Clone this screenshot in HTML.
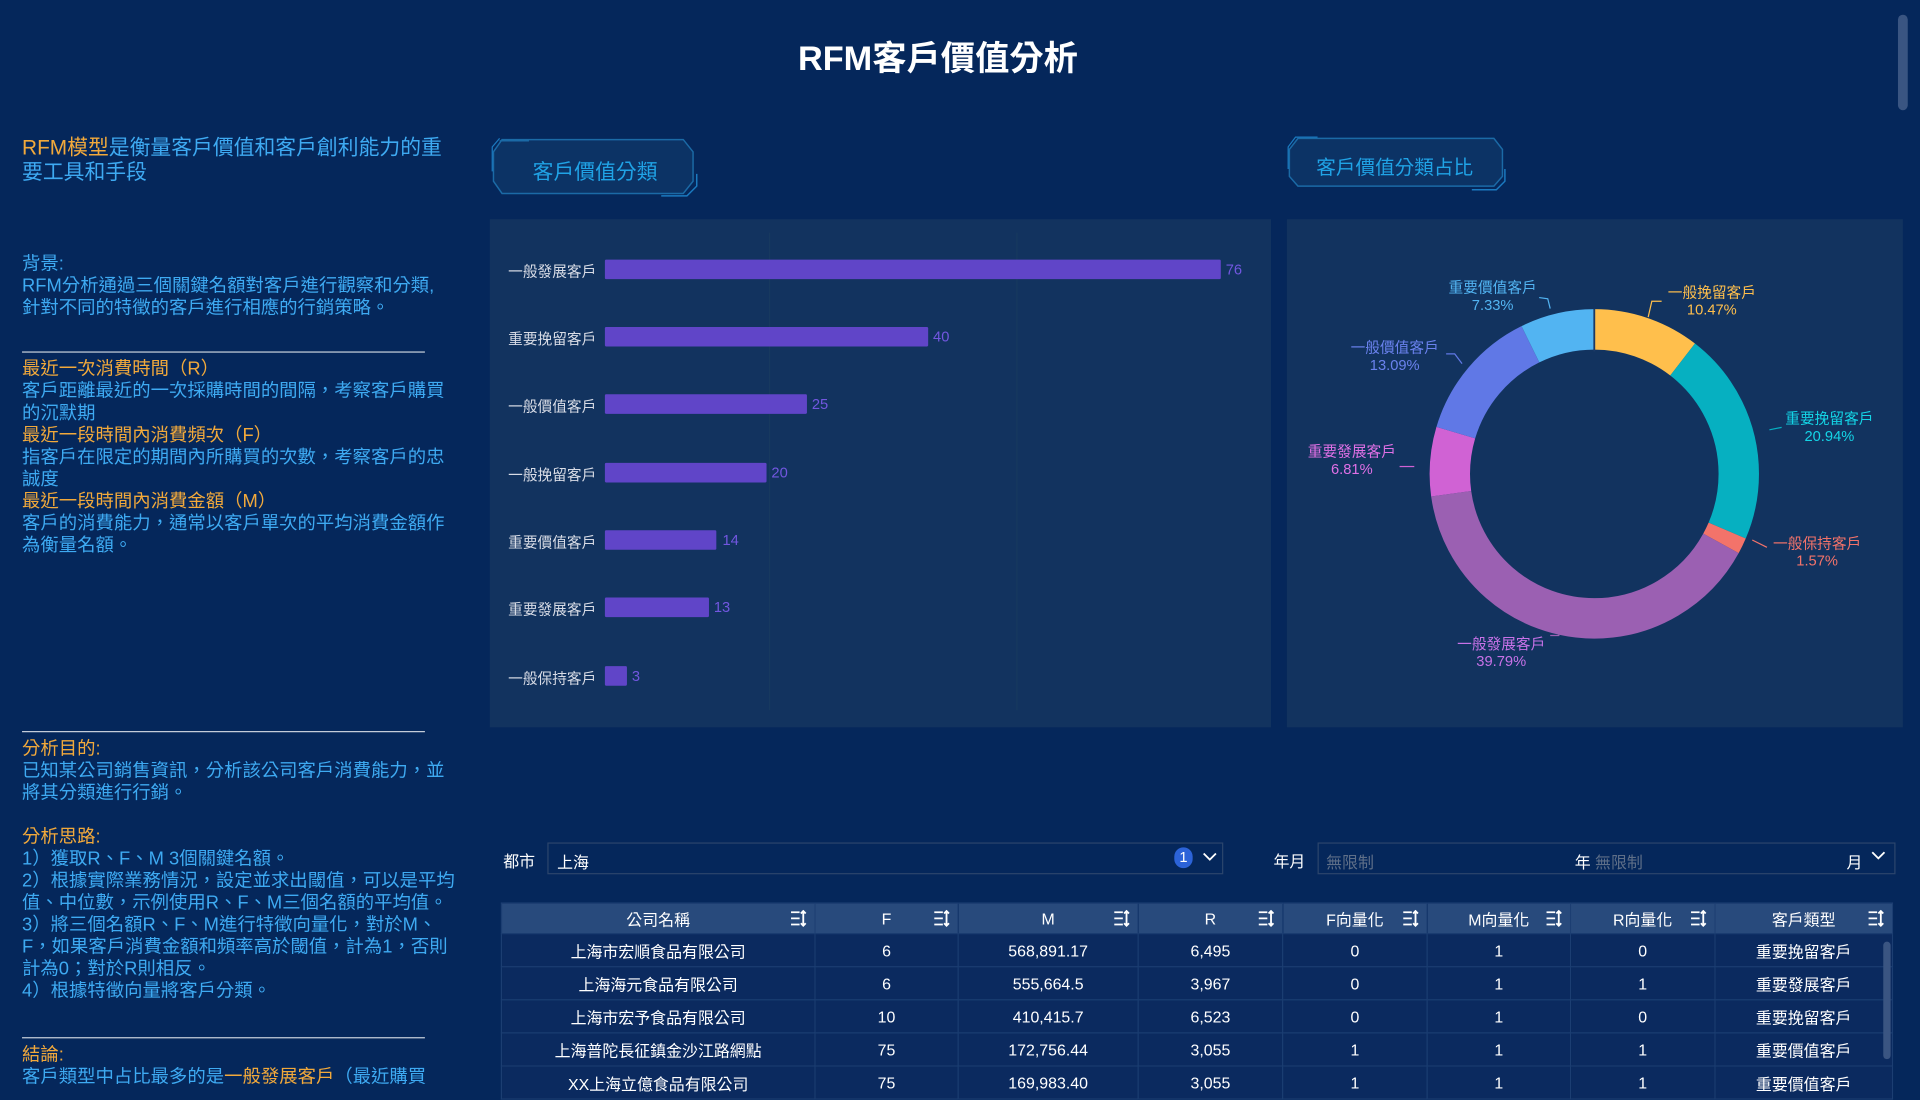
<!DOCTYPE html>
<html><head><meta charset="utf-8"><style>
html,body{margin:0;padding:0;background:#05275b;overflow:hidden;width:1920px;height:1080px}
#w{position:absolute;left:0;top:0;width:1568px;height:882px;transform:scale(1.22449);transform-origin:0 0;font-family:"Liberation Sans","Noto Sans CJK TC",sans-serif;}
.a{position:absolute;white-space:nowrap}
.lt{position:absolute;left:18px;font-size:15px;line-height:18px;color:#3eaaf2;white-space:nowrap}
.o{color:#f2a93b}
.hr{position:absolute;left:18px;width:329px;height:1px;background:#c8d0dc}
.bl{position:absolute;right:1081px;font-size:12px;color:#d8dce6;text-align:right}
.bar{position:absolute;left:494px;height:16px;background:#6045c8;border-radius:1px}
.bv{position:absolute;font-size:12px;color:#7257e0}
.pl{position:absolute;font-size:12px;line-height:14px;text-align:center;white-space:nowrap;transform:translateX(-50%)}
table{position:absolute;left:409px;top:737px;border-collapse:collapse;font-size:13px;color:#fff}
td,th{border:1px solid #1c3e72;text-align:center;height:26px;padding:0;position:relative}
th{background:#284a7c;font-weight:normal;height:24px}
td{background:#0b2a5f}
.si{position:absolute;right:6px;top:5px}
</style></head><body><div id="w">
<div class="a" style="left:0;width:1532px;top:26px;text-align:center;font-size:28px;font-weight:bold;color:#fff">RFM客戶價值分析</div>
<div class="a" style="left:1550px;top:12px;width:8px;height:78px;border-radius:4px;background:#3a5582"></div>

<div class="lt" style="top:111px;font-size:17px;line-height:20px"><span class="o">RFM模型</span>是衡量客戶價值和客戶創利能力的重<br>要工具和手段</div>
<div class="lt" style="top:207px">背景:<br>RFM分析通過三個關鍵名額對客戶進行觀察和分類,<br>針對不同的特徵的客戶進行相應的行銷策略。</div>
<div class="hr" style="top:287px"></div>
<div class="lt" style="top:293px"><span class="o">最近一次消費時間（R）</span><br>客戶距離最近的一次採購時間的間隔，考察客戶購買<br>的沉默期<br><span class="o">最近一段時間內消費頻次（F）</span><br>指客戶在限定的期間內所購買的次數，考察客戶的忠<br>誠度<br><span class="o">最近一段時間內消費金額（M）</span><br>客戶的消費能力，通常以客戶單次的平均消費金額作<br>為衡量名額。</div>
<div class="hr" style="top:597px"></div>
<div class="lt" style="top:603px"><span class="o">分析目的:</span><br>已知某公司銷售資訊，分析該公司客戶消費能力，並<br>將其分類進行行銷。</div>
<div class="lt" style="top:675px"><span class="o">分析思路:</span><br>1）獲取R、F、M 3個關鍵名額。<br>2）根據實際業務情況，設定並求出閾值，可以是平均<br>值、中位數，示例使用R、F、M三個名額的平均值。<br>3）將三個名額R、F、M進行特徵向量化，對於M、<br>F，如果客戶消費金額和頻率高於閾值，計為1，否則<br>計為0；對於R則相反。<br>4）根據特徵向量將客戶分類。</div>
<div class="hr" style="top:847px"></div>
<div class="lt" style="top:853px"><span class="o">結論:</span><br>客戶類型中占比最多的是<span class="o">一般發展客戶</span>（最近購買</div>

<svg class="a" style="left:400px;top:110px" width="175" height="52"><path d="M8 5H32M3 14L10 4H158L166 14V38L158 48H10L3 38Z" fill="#0c3365" stroke="#1b6aa6" stroke-width="1.2"/><path d="M169 32V42L161 50H140" fill="none" stroke="#1b7ac0" stroke-width="1.2"/><path d="M2 30V10L8 3" fill="none" stroke="#1b7ac0"/></svg>
<div class="a" style="left:403px;width:166px;top:126px;text-align:center;font-size:17px;color:#20a3e6">客戶價值分類</div>
<svg class="a" style="left:1050px;top:110px" width="180" height="46"><path d="M3 12L10 3H170L177 12V34L170 42H10L3 34Z" fill="#0c3365" stroke="#1b6aa6" stroke-width="1.2"/><path d="M179 28V38L172 45H152" fill="none" stroke="#1b7ac0" stroke-width="1.2"/><path d="M2 28V10L8 2H26" fill="none" stroke="#1b7ac0"/></svg>
<div class="a" style="left:1052px;width:174px;top:123px;text-align:center;font-size:16px;color:#20a3e6">客戶價值分類占比</div>

<div class="a" style="left:400px;top:179px;width:638px;height:415px;background:#12335f"></div>
<div class="a" style="left:628px;top:190px;width:1px;height:390px;background:#17395f"></div>
<div class="a" style="left:830px;top:190px;width:1px;height:390px;background:#17395f"></div>
<div class="a" style="left:1051px;top:179px;width:503px;height:415px;background:#12335f"></div>

<div class="bl" style="top:213px">一般發展客戶</div><div class="bar" style="top:212px;width:503px"></div><div class="bv" style="left:1001px;top:213px">76</div>
<div class="bl" style="top:268px">重要挽留客戶</div><div class="bar" style="top:267px;width:264px"></div><div class="bv" style="left:762px;top:268px">40</div>
<div class="bl" style="top:323px">一般價值客戶</div><div class="bar" style="top:322px;width:165px"></div><div class="bv" style="left:663px;top:323px">25</div>
<div class="bl" style="top:379px">一般挽留客戶</div><div class="bar" style="top:378px;width:132px"></div><div class="bv" style="left:630px;top:379px">20</div>
<div class="bl" style="top:434px">重要價值客戶</div><div class="bar" style="top:433px;width:91px"></div><div class="bv" style="left:590px;top:434px">14</div>
<div class="bl" style="top:489px">重要發展客戶</div><div class="bar" style="top:488px;width:85px"></div><div class="bv" style="left:583px;top:489px">13</div>
<div class="bl" style="top:545px">一般保持客戶</div><div class="bar" style="top:544px;width:18px"></div><div class="bv" style="left:516px;top:545px">3</div>

<svg class="a" style="left:1152px;top:237px" width="300" height="300" viewBox="0 0 300 300">
<g transform="rotate(-90 150 150)" fill="none" stroke-width="33">
<circle cx="150" cy="150" r="118" stroke="#ffbf4c" stroke-dasharray="77.6 700" stroke-dashoffset="0"/>
<circle cx="150" cy="150" r="118" stroke="#06b0c1" stroke-dasharray="155.3 700" stroke-dashoffset="-77.6"/>
<circle cx="150" cy="150" r="118" stroke="#f3736a" stroke-dasharray="11.6 730" stroke-dashoffset="-232.9"/>
<circle cx="150" cy="150" r="118" stroke="#9b60b2" stroke-dasharray="295 500" stroke-dashoffset="-244.5"/>
<circle cx="150" cy="150" r="118" stroke="#d062d4" stroke-dasharray="50.5 700" stroke-dashoffset="-539.5"/>
<circle cx="150" cy="150" r="118" stroke="#6078e6" stroke-dasharray="97.05 700" stroke-dashoffset="-590"/>
<circle cx="150" cy="150" r="118" stroke="#52b4f2" stroke-dasharray="54.3 700" stroke-dashoffset="-687.1"/>
</g>
<g stroke="#1c3a66" stroke-width="1.5"><line x1="150" y1="15" x2="150" y2="50"/></g>
</svg>
<svg class="a" style="left:1051px;top:179px" width="503" height="415" fill="none" stroke-width="1">
<path d="M206 64L213 65L215 73" stroke="#52b4f2"/><path d="M306 67H298L295 80" stroke="#ffbf4c"/>
<path d="M130 110H137L143 118" stroke="#6078e6"/><path d="M404 170L394 172" stroke="#06b0c1"/>
<path d="M92 202H104" stroke="#d062d4"/><path d="M392 268L380 262" stroke="#f3736a"/>
<path d="M215 340H222L224 330" stroke="#9b60b2"/>
</svg>
<div class="pl" style="left:1219px;top:228px;color:#52b4f2">重要價值客戶<br>7.33%</div>
<div class="pl" style="left:1398px;top:232px;color:#ffbf4c">一般挽留客戶<br>10.47%</div>
<div class="pl" style="left:1139px;top:277px;color:#6a82ee">一般價值客戶<br>13.09%</div>
<div class="pl" style="left:1494px;top:335px;color:#14d4e6">重要挽留客戶<br>20.94%</div>
<div class="pl" style="left:1104px;top:362px;color:#e070e6">重要發展客戶<br>6.81%</div>
<div class="pl" style="left:1484px;top:437px;color:#f3736a">一般保持客戶<br>1.57%</div>
<div class="pl" style="left:1226px;top:519px;color:#c872e8">一般發展客戶<br>39.79%</div>

<div class="a" style="left:411px;top:693px;font-size:13px;color:#fff">都市</div>
<div class="a" style="left:447px;top:688px;width:552px;height:26px;border:1px solid #2b456c;box-sizing:border-box"></div>
<div class="a" style="left:455px;top:694px;font-size:13px;color:#fff">上海</div>
<div class="a" style="left:959px;top:692px;width:15px;height:17px;border-radius:8px;background:#2c63d8;color:#fff;font-size:12px;text-align:center;line-height:17px">1</div>
<svg class="a" style="left:982px;top:696px" width="12" height="8"><path d="M1 1L6 6L11 1" stroke="#fff" fill="none" stroke-width="1.5"/></svg>
<div class="a" style="left:1040px;top:693px;font-size:13px;color:#fff">年月</div>
<div class="a" style="left:1076px;top:688px;width:472px;height:26px;border:1px solid #2b456c;box-sizing:border-box"></div>
<div class="a" style="left:1083px;top:694px;font-size:13px;color:#5f6f88">無限制</div>
<div class="a" style="left:1286px;top:694px;font-size:13px;color:#fff">年 <span style="color:#5f6f88">無限制</span></div>
<div class="a" style="left:1508px;top:694px;font-size:13px;color:#fff">月</div>
<svg class="a" style="left:1528px;top:695px" width="12" height="8"><path d="M1 1L6 6L11 1" stroke="#fff" fill="none" stroke-width="1.5"/></svg>

<table>
<tr>
<th style="width:255px">公司名稱<svg class="si" width="14" height="14"><path d="M1 2H8M1 7H8M1 12H8M11 1V13M9 3L11 1L13 3M9 11L11 13L13 11" stroke="#fff" fill="none" stroke-width="1.5"/></svg></th>
<th style="width:116px">F<svg class="si" width="14" height="14"><path d="M1 2H8M1 7H8M1 12H8M11 1V13M9 3L11 1L13 3M9 11L11 13L13 11" stroke="#fff" fill="none" stroke-width="1.5"/></svg></th>
<th style="width:146px">M<svg class="si" width="14" height="14"><path d="M1 2H8M1 7H8M1 12H8M11 1V13M9 3L11 1L13 3M9 11L11 13L13 11" stroke="#fff" fill="none" stroke-width="1.5"/></svg></th>
<th style="width:117px">R<svg class="si" width="14" height="14"><path d="M1 2H8M1 7H8M1 12H8M11 1V13M9 3L11 1L13 3M9 11L11 13L13 11" stroke="#fff" fill="none" stroke-width="1.5"/></svg></th>
<th style="width:117px">F向量化<svg class="si" width="14" height="14"><path d="M1 2H8M1 7H8M1 12H8M11 1V13M9 3L11 1L13 3M9 11L11 13L13 11" stroke="#fff" fill="none" stroke-width="1.5"/></svg></th>
<th style="width:116px">M向量化<svg class="si" width="14" height="14"><path d="M1 2H8M1 7H8M1 12H8M11 1V13M9 3L11 1L13 3M9 11L11 13L13 11" stroke="#fff" fill="none" stroke-width="1.5"/></svg></th>
<th style="width:117px">R向量化<svg class="si" width="14" height="14"><path d="M1 2H8M1 7H8M1 12H8M11 1V13M9 3L11 1L13 3M9 11L11 13L13 11" stroke="#fff" fill="none" stroke-width="1.5"/></svg></th>
<th style="width:144px">客戶類型<svg class="si" width="14" height="14"><path d="M1 2H8M1 7H8M1 12H8M11 1V13M9 3L11 1L13 3M9 11L11 13L13 11" stroke="#fff" fill="none" stroke-width="1.5"/></svg></th>
</tr>
<tr><td>上海市宏順食品有限公司</td><td>6</td><td>568,891.17</td><td>6,495</td><td>0</td><td>1</td><td>0</td><td>重要挽留客戶</td></tr>
<tr><td>上海海元食品有限公司</td><td>6</td><td>555,664.5</td><td>3,967</td><td>0</td><td>1</td><td>1</td><td>重要發展客戶</td></tr>
<tr><td>上海市宏予食品有限公司</td><td>10</td><td>410,415.7</td><td>6,523</td><td>0</td><td>1</td><td>0</td><td>重要挽留客戶</td></tr>
<tr><td>上海普陀長征鎮金沙江路網點</td><td>75</td><td>172,756.44</td><td>3,055</td><td>1</td><td>1</td><td>1</td><td>重要價值客戶</td></tr>
<tr><td>XX上海立億食品有限公司</td><td>75</td><td>169,983.40</td><td>3,055</td><td>1</td><td>1</td><td>1</td><td>重要價值客戶</td></tr>
</table>
<div class="a" style="left:1538px;top:769px;width:6px;height:96px;border-radius:3px;background:#3a5582"></div>
</div></body></html>
